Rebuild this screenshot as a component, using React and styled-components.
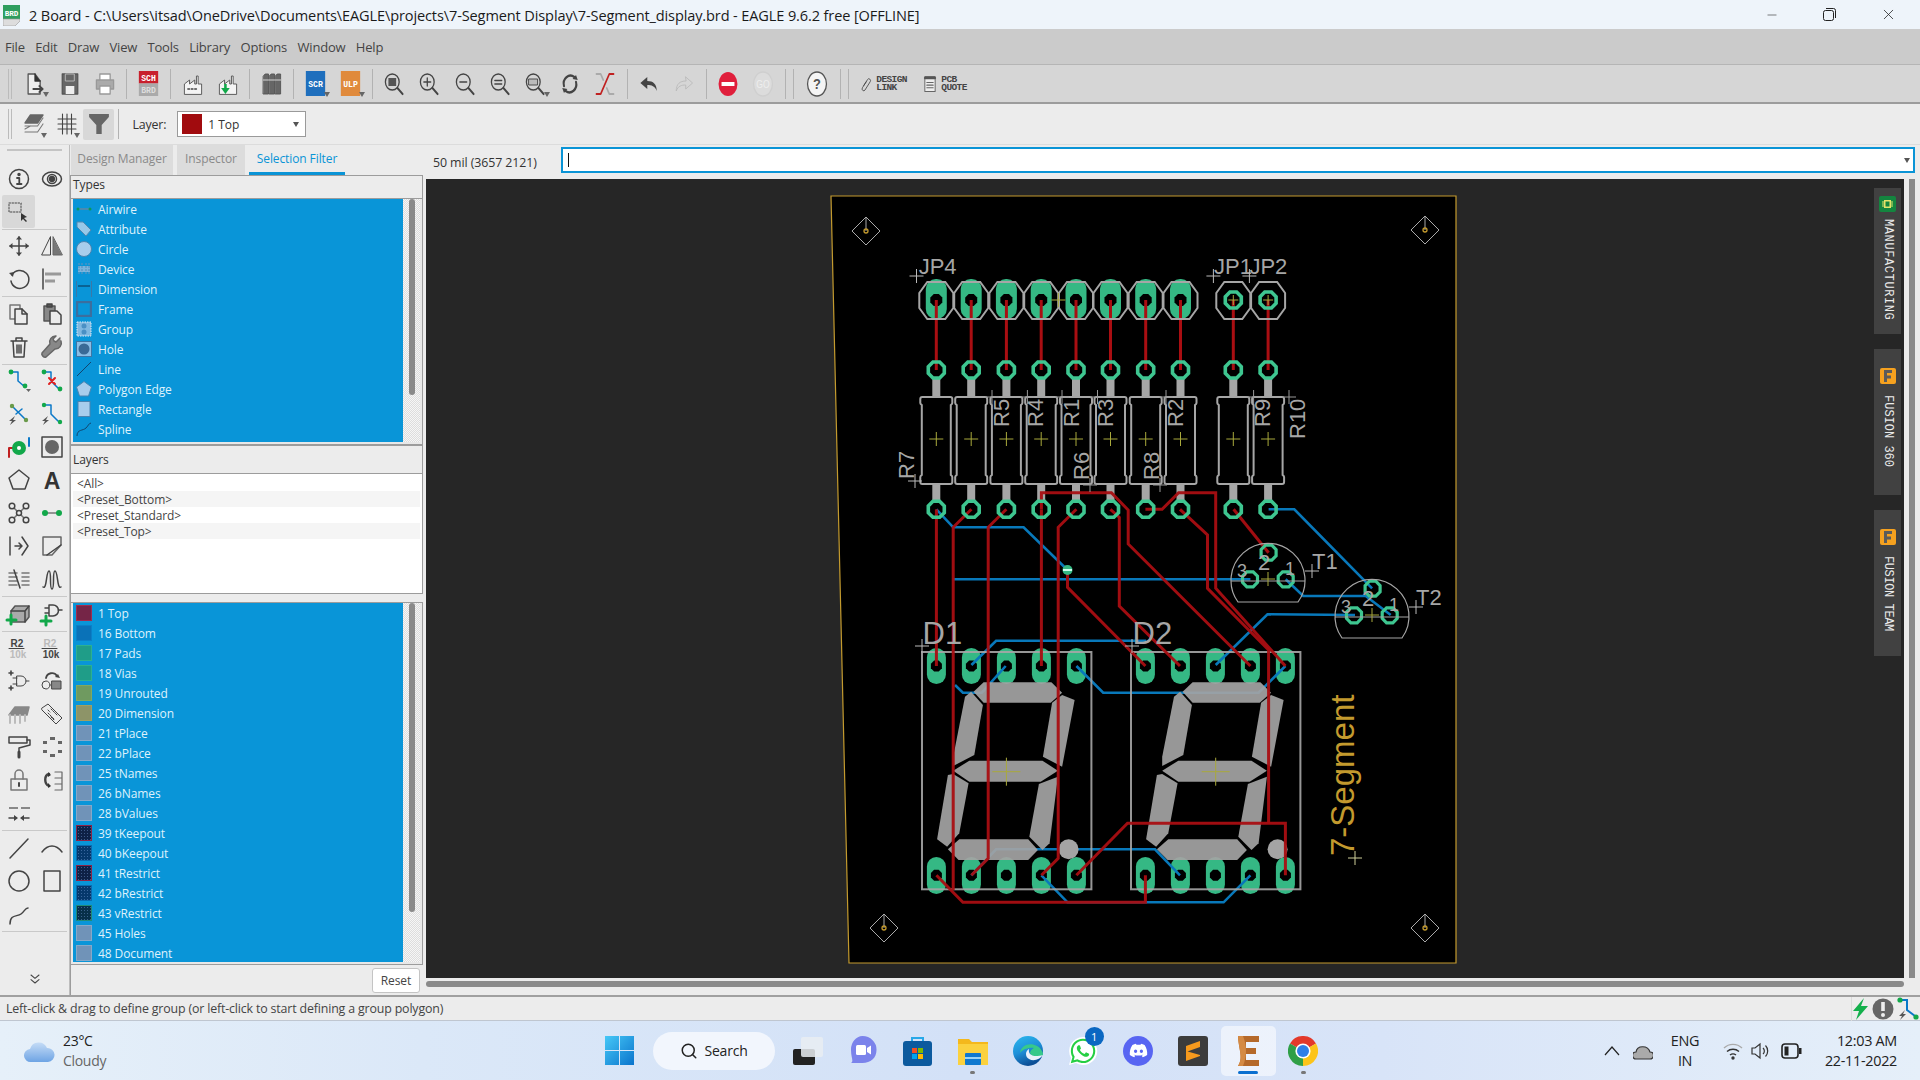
import React from "react";
import styled, { createGlobalStyle } from "styled-components";
import { Search, Minus, X } from "lucide-react";
import { FaWhatsapp, FaDiscord } from "react-icons/fa";

const GlobalStyle = createGlobalStyle`
  html, body { margin: 0; padding: 0; overflow: hidden; background: #ececec; }
  * { box-sizing: border-box; }
`;

/* ---------- shell ---------- */

const Page = styled.div`
  width: 1920px;
  height: 1080px;
  display: flex;
  flex-direction: column;
  font-family: "Liberation Sans", Arial, sans-serif;
  color: #333;
  overflow: hidden;
`;

const TitleBar = styled.div`
  height: 29px;
  flex: none;
  display: flex;
  align-items: center;
  background: #eef4fa;
  padding-left: 3px;
  font-family: "Open Sans", sans-serif;
  font-size: 14.55px;
  color: #1a1a1a;
  letter-spacing: -0.12px;
`;

const TitleText = styled.span`
  margin-left: 9px;
  white-space: nowrap;
`;

const WindowControls = styled.div`
  margin-left: auto;
  display: flex;
  align-items: center;
  padding-right: 23px;
  gap: 44px;
  color: #222;
`;

const MenuBar = styled.div`
  height: 36px;
  flex: none;
  display: flex;
  align-items: center;
  background: #cbcbcb;
  border-bottom: 1px solid #b5b5b5;
  padding-left: 5px;
  gap: 10.4px;
  font-family: "Open Sans", sans-serif;
  font-size: 13px;
  color: #444;
  letter-spacing: -0.2px;
`;

const MainToolbar = styled.div`
  height: 39px;
  flex: none;
  display: flex;
  align-items: center;
  background: #d6d6d6;
  border-bottom: 2px solid #9c9c9c;
  padding-left: 8px;
  svg { transform: scaleX(0.86); }
`;

const SecondToolbar = styled.div`
  height: 41px;
  flex: none;
  display: flex;
  align-items: center;
  background: #ececec;
  border-bottom: 1px solid #dcdcdc;
  padding-left: 8px;
  svg { transform: scaleX(0.9); }
`;

const Grip = styled.div`
  width: 4px;
  height: 30px;
  flex: none;
  margin-right: 5px;
  border-left: 1px solid #bbb;
  border-right: 1px solid #bbb;
`;

const Separator = styled.div`
  width: 8.6px;
  height: 30px;
  flex: none;
  display: flex;
  justify-content: center;
  &::before {
    content: "";
    width: 1px;
    background: #b2b2b2;
  }
`;

const ToolButton = styled.div`
  position: relative;
  width: ${(p) => p.$w || 35.2}px;
  height: 31px;
  flex: none;
  display: flex;
  align-items: center;
  justify-content: center;
  border-radius: 2px;
  background: ${(p) => (p.$on ? "#d8d8d8" : "transparent")};
  ${(p) =>
    p.$caret &&
    `&::after {
      content: "";
      position: absolute;
      right: 3px;
      bottom: 2px;
      border-left: 3px solid transparent;
      border-right: 3px solid transparent;
      border-top: 5px solid #666;
    }`}
`;

const LinkButton = styled.div`
  display: flex;
  align-items: center;
  gap: 2px;
  width: 65px;
  flex: none;
  margin-left: ${(p) => p.$ml || 0}px;
`;

const LinkLabel = styled.div`
  font-family: "Liberation Mono", monospace;
  font-size: 9.5px;
  line-height: 8px;
  font-weight: bold;
  color: #444;
  letter-spacing: -0.6px;
`;

const FieldLabel = styled.span`
  margin-left: 10px;
  font-size: 12.4px;
  color: #333;
  font-family: "Open Sans", sans-serif;
  letter-spacing: -0.2px;
`;

const LayerSelect = styled.div`
  position: relative;
  margin-left: 11px;
  width: 129px;
  height: 26px;
  display: flex;
  align-items: center;
  background: #fff;
  border: 1px solid #9a9a9a;
  padding-left: 4px;
  font-family: "Open Sans", sans-serif;
  font-size: 12px;
  color: #333;
  &::after {
    content: "";
    position: absolute;
    right: 6px;
    top: 10px;
    border-left: 3px solid transparent;
    border-right: 3px solid transparent;
    border-top: 5px solid #555;
  }
`;

const LayerChip = styled.span`
  width: 20px;
  height: 20px;
  background: #a10b0e;
  margin-right: 6px;
`;

const Workspace = styled.div`
  flex: 1;
  min-height: 0;
  display: flex;
  background: #ececec;
`;

/* ---------- left tool strip ---------- */

const ToolStrip = styled.div`
  width: 70px;
  flex: none;
  display: flex;
  flex-direction: column;
  padding: 0 2px;
  border-right: 1px solid #bdbdbd;
`;

const StripHandle = styled.div`
  height: 13px;
  margin: 4px 5px 0;
  border-top: 1px solid #c4c4c4;
  box-shadow: inset 0 3px 0 -2px #c4c4c4;
`;

const StripGroup = styled.div`
  display: grid;
  grid-template-columns: 33px 33px;
  grid-auto-rows: 33px;
  padding: 0 0 0.5px;
  border-bottom: ${(p) => (p.$last ? "none" : "1px solid #c9c9c9")};
`;

const StripCell = styled.div`
  display: flex;
  align-items: center;
  justify-content: center;
  position: relative;
  border-radius: 2px;
  background: ${(p) => (p.$on ? "#d8d8d8" : "transparent")};
`;

const StripChevron = styled.div`
  margin-top: auto;
  padding-bottom: 8px;
  text-align: center;
  line-height: 0;
`;

/* ---------- selection filter panel ---------- */

const SidePanel = styled.div`
  width: 353px;
  flex: none;
  display: flex;
  flex-direction: column;
  font-family: "Open Sans", sans-serif;
  font-size: 12px;
  letter-spacing: -0.1px;
`;

const Tabs = styled.div`
  height: 30px;
  flex: none;
  display: flex;
  gap: 4px;
  padding-left: 1px;
`;

const Tab = styled.div`
  width: ${(p) => p.$w}px;
  display: flex;
  align-items: center;
  justify-content: center;
  background: ${(p) => (p.$active ? "transparent" : "#dcdcdc")};
  color: ${(p) => (p.$active ? "#0a94d6" : "#8a8a8a")};
  border-bottom: 3px solid ${(p) => (p.$active ? "#0a94d6" : "#dcdcdc")};
`;

const Section = styled.div`
  height: ${(p) => p.$h}px;
  flex: none;
  display: flex;
  align-items: center;
  padding-left: 2px;
  padding-bottom: ${(p) => p.$pb || 0}px;
  border: 1px solid #9c9c9c;
  border-bottom: none;
  color: #333;
`;

const ListBox = styled.div`
  height: ${(p) => p.$h}px;
  flex: none;
  display: flex;
  background: ${(p) => (p.$plain ? "#fff" : "#e8e8e8")};
  border: 1px solid #9c9c9c;
  padding: 0 2px 2px;
  overflow: hidden;
`;

const BlueList = styled.div`
  width: 330px;
  flex: none;
  background: #0995d8;
  overflow: hidden;
`;

const BlueRow = styled.div`
  height: 20px;
  display: flex;
  align-items: center;
  padding-left: 3px;
  color: #dff2fc;
  white-space: nowrap;
`;

const RowIcon = styled.span`
  width: 16px;
  height: 16px;
  flex: none;
  margin-right: 6px;
  display: flex;
  align-items: center;
  justify-content: center;
`;

const Swatch = styled.span`
  width: 16px;
  height: 16px;
  flex: none;
  margin-right: 6px;
  background: ${(p) => p.$fill};
  border: 1px solid ${(p) => p.$edge || "rgba(255,255,255,0.25)"};
  ${(p) =>
    p.$dots &&
    `background-image: radial-gradient(rgba(120,160,220,.45) 0.6px, transparent 0.8px);
     background-size: 3px 3px;`}
`;

const ScrollTrack = styled.div`
  flex: 1;
  display: flex;
  justify-content: center;
  background-image: conic-gradient(#ddd 25%, #f6f6f6 0 50%, #ddd 0 75%, #f6f6f6 0);
  background-size: 2px 2px;
`;

const ScrollThumb = styled.div`
  width: 6px;
  height: ${(p) => p.$h}px;
  background: #8a8a8a;
  border-radius: 3px;
`;

const PlainList = styled.div`
  width: 100%;
  margin-top: 1px;
`;

const PlainRow = styled.div`
  height: 16px;
  padding-left: 4px;
  display: flex;
  align-items: center;
  background: ${(p) => (p.$alt ? "#f5f5f5" : "#fff")};
  color: #444;
`;

const PanelGap = styled.div`
  height: ${(p) => p.$h}px;
  flex: none;
  border-left: 1px solid #9c9c9c;
`;

const PanelFooter = styled.div`
  flex: 1;
  display: flex;
  justify-content: flex-end;
  align-items: center;
  padding-right: 3px;
  border-left: 1px solid #9c9c9c;
`;

const ResetButton = styled.div`
  width: 48px;
  height: 25px;
  display: flex;
  align-items: center;
  justify-content: center;
  background: #fff;
  border: 1px solid #c4c4c4;
  border-radius: 3px;
  font-size: 12px;
  color: #444;
`;

/* ---------- stage ---------- */

const Stage = styled.div`
  flex: 1;
  min-width: 0;
  margin-left: 3px;
  display: flex;
  flex-direction: column;
`;

const CommandRow = styled.div`
  height: 34px;
  flex: none;
  display: flex;
  align-items: center;
  padding: 0 5px 4px 7px;
  font-family: "Open Sans", sans-serif;
  font-size: 12.4px;
  color: #333;
`;

const CoordText = styled.span`
  width: 128px;
  flex: none;
  margin-top: 4px;
  letter-spacing: -0.1px;
  white-space: nowrap;
`;

const CommandInput = styled.div`
  position: relative;
  flex: 1;
  height: 26px;
  background: #fff;
  border: 2px solid #0a94d6;
  padding-left: 5px;
  display: flex;
  align-items: center;
  &::before {
    content: "";
    width: 1px;
    height: 14px;
    background: #111;
  }
  &::after {
    content: "";
    position: absolute;
    right: 3px;
    top: 9px;
    border-left: 3px solid transparent;
    border-right: 3px solid transparent;
    border-top: 5px solid #555;
  }
`;

const CanvasRow = styled.div`
  flex: 1;
  min-height: 0;
  display: flex;
`;

const Canvas = styled.div`
  position: relative;
  flex: 1;
  min-width: 0;
  background: #262626;
  overflow: hidden;
`;

const BoardSvg = styled.svg`
  display: block;
  width: 100%;
  height: 100%;
`;

const SideTab = styled.div`
  position: absolute;
  right: 3px;
  top: ${(p) => p.$top}px;
  width: 27px;
  height: 146px;
  background: #414141;
  display: flex;
  flex-direction: column;
  align-items: center;
  padding-top: ${(p) => p.$pad}px;
  gap: ${(p) => p.$gap}px;
`;

const SideTabText = styled.span`
  writing-mode: vertical-rl;
  font-family: "Liberation Mono", monospace;
  font-size: 12px;
  letter-spacing: ${(p) => p.$ls || 0}px;
  color: #ececec;
  white-space: nowrap;
`;

const VScroll = styled.div`
  width: 16px;
  flex: none;
  padding-left: 5px;
  background: #ececec;
`;

const VThumb = styled.div`
  width: 6px;
  height: 100%;
  background: #8a8a8a;
`;

const HScroll = styled.div`
  height: 17px;
  flex: none;
  padding: 3px 16px 0 0;
`;

const HThumb = styled.div`
  height: 6px;
  background: #8a8a8a;
  border-radius: 3px;
`;

const StatusBar = styled.div`
  height: 26px;
  flex: none;
  display: flex;
  align-items: center;
  padding-left: 6px;
  background: #ececec;
  border-top: 2px solid #a0a0a0;
  border-bottom: 1px solid #bfc6d0;
  font-family: "Open Sans", sans-serif;
  font-size: 12.4px;
  color: #444;
  letter-spacing: -0.16px;
`;

const StatusIcons = styled.div`
  margin-left: auto;
  display: flex;
  align-items: center;
  gap: 3px;
  padding-right: 1px;
  border-left: 1px solid #dadada;
`;

/* ---------- taskbar ---------- */

const TaskBar = styled.div`
  height: 59px;
  flex: none;
  display: flex;
  align-items: center;
  background: linear-gradient(90deg, #e6f0f9 0%, #dbe8f8 22%, #d3e1f7 50%, #d8e4f8 72%, #e5eff9 100%);
  font-family: "Open Sans", sans-serif;
  color: #333;
`;

const Weather = styled.div`
  width: 605px;
  flex: none;
  display: flex;
  align-items: center;
  padding-left: 24px;
  gap: 8px;
`;

const WeatherText = styled.div`
  font-size: 14px;
  line-height: 20px;
  letter-spacing: -0.3px;
  color: ${(p) => (p.$dim ? "#666" : "#222")};
`;

const SearchPill = styled.div`
  width: 122px;
  height: 38px;
  margin: 0 5px 0 19px;
  flex: none;
  display: flex;
  align-items: center;
  justify-content: center;
  gap: 6px;
  border-radius: 19px;
  background: #f2f6fd;
  font-size: 14px;
  color: #222;
  letter-spacing: -0.2px;
`;

const TaskItem = styled.div`
  position: relative;
  width: 55.1px;
  height: 50px;
  flex: none;
  display: flex;
  align-items: center;
  justify-content: center;
  border-radius: 5px;
  background: ${(p) => (p.$active ? "rgba(255,255,255,.55)" : "transparent")};
`;

const RunDot = styled.span`
  position: absolute;
  bottom: 2px;
  left: 50%;
  height: 3px;
  width: ${(p) => (p.$active ? 20 : 5)}px;
  margin-left: ${(p) => (p.$active ? -10 : -2.5)}px;
  border-radius: 2px;
  background: ${(p) => (p.$active ? "#0a6fd0" : "#777")};
`;

const Badge = styled.span`
  position: absolute;
  top: 1px;
  right: 7px;
  width: 19px;
  height: 19px;
  border-radius: 50%;
  background: #0a67c2;
  color: #fff;
  font-size: 11px;
  display: flex;
  align-items: center;
  justify-content: center;
`;

const Tray = styled.div`
  margin-left: auto;
  display: flex;
  align-items: center;
  padding-right: 23px;
  font-size: 14.4px;
  color: #222;
  letter-spacing: -0.3px;
`;

const TrayStack = styled.div`
  width: ${(p) => p.$w}px;
  text-align: ${(p) => p.$align};
  line-height: 20px;
  white-space: nowrap;
  margin-right: ${(p) => p.$mr || 0}px;
`;

const TrayIcon = styled.span`
  width: 24px;
  display: flex;
  justify-content: center;
  margin-right: ${(p) => p.$mr || 0}px;
`;

/* ---------- icons ---------- */

const Glyph = ({ size = 24, box = 24, children }) => (
  <svg width={size} height={size} viewBox={`0 0 ${box} ${box}`} overflow="visible" fill="none" stroke="#444" strokeWidth="1.5" strokeLinecap="round" strokeLinejoin="round">
    {children}
  </svg>
);

const GREEN = "#12a84a";
const BLUE = "#0a78c8";

const icons = {
  info: <><circle cx="12" cy="12" r="9.5" /><circle cx="12" cy="7.5" r="1" fill="#444" /><path d="M10 11h2.3v6M10 17h4.5" strokeWidth="1.8" /></>,
  eye: <><ellipse cx="12" cy="12" rx="9.5" ry="7" /><circle cx="12" cy="12" r="4.5" /><circle cx="12" cy="12" r="2.4" fill="#444" /></>,
  select: <><rect x="2" y="3" width="12" height="9" strokeDasharray="1.5 1.5" strokeWidth="1" /><path d="M14 13l0 8 2-2 3 3 1-1-3-3 3-1z" fill="#333" stroke="none" /></>,
  move: <><path d="M12 3v18M3 12h18" /><path d="M12 2l-3 3.5h6zM12 22l-3-3.5h6zM2 12l3.5-3v6zM22 12l-3.5-3v6z" fill="#444" stroke="none" /></>,
  mirror: <><path d="M10.5 3v18H2z" strokeWidth="1" /><path d="M13 3v18h9z" fill="#777" stroke="#666" strokeWidth="1" /></>,
  rotate: <><path d="M5 8a9 9 0 1 1-1 6" /><path d="M2 6l5-1-1 5z" fill="#444" stroke="none" /></>,
  align: <><path d="M3 2v20" /><path d="M5 7h16" stroke="#999" strokeWidth="3" strokeLinecap="butt" /><path d="M5 14h10" stroke="#999" strokeWidth="3" strokeLinecap="butt" /></>,
  copy: <><path d="M3 3h10v14H3z" stroke="#777" /><path d="M8 7h7l5 5v10H8z" fill="#ececec" /><path d="M15 7v5h5" /></>,
  paste: <><path d="M4 4h11v15H4z" fill="#888" stroke="#555" /><path d="M7 2h5v3H7z" fill="#555" /><path d="M10 9h7l4 4v9H10z" fill="#ececec" /></>,
  trash: <><path d="M4 6h16M9 6V3h6v3M6 6l1 16h10l1-16" /><path d="M10 10v8M12 10v8M14 10v8" /></>,
  wrench: <path d="M20 3l-4 4-2-1-1-2 3-3a6 6 0 0 0-6 8L2 18c-1 2 2 5 4 4l9-8a6 6 0 0 0 6-8" fill="#888" stroke="#666" />,
  route: <><path d="M4 3h7v9l7 6" stroke={BLUE} /><circle cx="4" cy="3" r="2.4" fill={GREEN} stroke="none" /><circle cx="18" cy="17" r="2.4" fill={GREEN} stroke="none" /><path d="M19 20h5l-2.5 3z" fill="#666" stroke="none" /></>,
  ripup: <><path d="M4 3h7v9l7 7" stroke={BLUE} /><circle cx="4" cy="3" r="2.4" fill={GREEN} stroke="none" /><circle cx="20" cy="20" r="2.4" fill={GREEN} stroke="none" /><path d="M9 9l6 6M15 9l-6 6" stroke="#e02020" strokeWidth="2" /></>,
  fanout: <><path d="M5 4l14 14M9 12l6-5" stroke={BLUE} /><circle cx="5" cy="4" r="2.2" fill="#6a9a4a" stroke="none" /><circle cx="19" cy="18" r="2.2" fill="#6a9a4a" stroke="none" /><path d="M8 14l-6 5 3 0-2 4 6-5-3 0z" fill="#555" stroke="none" /></>,
  reroute: <><path d="M4 3h7v9l7 7" stroke={BLUE} /><circle cx="4" cy="3" r="2.2" fill={GREEN} stroke="none" /><circle cx="20" cy="20" r="2.2" fill={GREEN} stroke="none" /><path d="M8 14l-6 5 3 0-2 4 6-5-3 0z" fill="#555" stroke="none" /></>,
  via: <><path d="M2 22v-9h4" stroke="#c02020" strokeWidth="2" /><path d="M22 3v8" stroke={BLUE} strokeWidth="2" /><circle cx="12" cy="13" r="7" fill={GREEN} stroke="none" /><circle cx="12" cy="13" r="2" fill="#fff" stroke="none" /></>,
  hole: <><rect x="2" y="2" width="20" height="20" /><circle cx="12" cy="12" r="7" fill="#666" stroke="none" /></>,
  polygon: <path d="M12 2l10 8-4 11H6L2 10z" />,
  letter: <text x="12" y="20.5" fontSize="23" textAnchor="middle" fill="#333" stroke="none" fontFamily="Liberation Sans" fontWeight="bold">A</text>,
  net: <><path d="M6 6l12 12M18 6L6 18" stroke="#777" /><circle cx="5" cy="5" r="2.8" fill="#ececec" /><circle cx="19" cy="5" r="2.8" fill="#ececec" /><circle cx="5" cy="19" r="2.8" fill="#ececec" /><circle cx="19" cy="19" r="2.8" fill="#ececec" /><circle cx="12" cy="12" r="2.5" fill="#ececec" /></>,
  air: <><path d="M5 12h14" stroke="#777" /><circle cx="5" cy="12" r="3" fill={GREEN} stroke="none" /><circle cx="19" cy="12" r="3" fill={GREEN} stroke="none" /></>,
  smash: <><path d="M3 3v18M8 12h6M12 9l3 3-3 3" /><path d="M15 3l6 9-6 9" /></>,
  corner: <><path d="M3 3h18v8L12 21H3z" stroke="#666" /><path d="M7 21l14-10" /></>,
  meander: <><path d="M2 6h8M2 10h8M2 14h8M2 18h8" stroke="#777" /><path d="M7 3l6 18" /><path d="M15 6h7M15 10h7M15 14h7M15 18h7" stroke="#777" /></>,
  wave: <path d="M3 20c4 3 3-16 6-16 3 0 0 18 3 18s0-18 3-18 2 19 6 16" />,
  addBox: <><path d="M4 9l4-5h14v11l-4 5H4z" fill="#aaa" stroke="#555" /><path d="M4 9h14v11M18 9l4-5" /><path d="M4 13v9M0 18h9" stroke={GREEN} strokeWidth="3" /></>,
  addGate: <><path d="M9 3h4a5 5 0 0 1 0 11H9zM5 6h4M5 11h4M18 8h4" /><path d="M6 14v9M1 19h10" stroke={GREEN} strokeWidth="3" /></>,
  valueA: <><text x="10" y="11" fontSize="10" textAnchor="middle" fontWeight="bold" fill="#444" stroke="none" fontFamily="Liberation Sans">R2</text><path d="M2 12.5h15" strokeWidth="1" /><text x="11" y="22" fontSize="10" textAnchor="middle" fontWeight="bold" fill="#bbb" stroke="none" fontFamily="Liberation Sans">10k</text></>,
  valueB: <><text x="10" y="11" fontSize="10" textAnchor="middle" fontWeight="bold" fill="#bbb" stroke="none" fontFamily="Liberation Sans">R2</text><path d="M2 12.5h15" strokeWidth="1" /><text x="11" y="22" fontSize="10" textAnchor="middle" fontWeight="bold" fill="#444" stroke="none" fontFamily="Liberation Sans">10k</text></>,
  replace: <><path d="M2 4h4M4 2v4M2 19h4M4 17v4" strokeWidth="1.6" /><path d="M10 7h4a5 5 0 0 1 0 10h-4zM6 9h4M6 15h4M19 12h3" strokeWidth="1" /></>,
  swap: <><circle cx="6" cy="16" r="4" strokeWidth="1" /><rect x="12" y="12" width="9" height="8" fill="#888" strokeWidth="1" /><path d="M6 9a6 6 0 0 1 11-2" strokeWidth="1.8" /><path d="M20 9l-5-1 3-3z" fill="#444" stroke="none" /></>,
  chip: <><path d="M2 13l6-8h14l-2 8z" fill="#888" stroke="#888" /><path d="M3 13v8M8 13v8M13 13v8M18 13v6" stroke="#bbb" strokeWidth="2" /></>,
  tag: <><path d="M2 6l6-4 14 14-6 6L2 8z" strokeWidth="1" /><path d="M8 8l2 2M11 7l6 6M8 11l6 6M11 15l3 3" strokeDasharray="1.5 1" strokeWidth="1" /></>,
  paint: <><rect x="2" y="2" width="18" height="6" /><path d="M20 5h3v5l-11 3v4" /><path d="M12 17v5" strokeWidth="3" /></>,
  ring: <><rect x="10" y="2" width="5" height="3" fill="#666" stroke="none" /><rect x="10" y="19" width="5" height="3" fill="#666" stroke="none" /><rect x="3" y="6" width="4" height="3" fill="#666" stroke="none" /><rect x="18" y="6" width="4" height="3" fill="#666" stroke="none" /><rect x="3" y="15" width="4" height="3" fill="#666" stroke="none" /><rect x="18" y="15" width="4" height="3" fill="#666" stroke="none" /></>,
  lock: <><rect x="4" y="11" width="16" height="11" stroke="#777" /><path d="M8 11V6a4 4 0 0 1 8 0v5" stroke="#777" /><path d="M12 15v3" strokeWidth="2" /></>,
  pinswap: <><path d="M9 6C4 7 4 16 9 18" strokeWidth="2.4" /><path d="M8 4l3 3-3 2zM8 15l3 3-3 2z" fill="#333" stroke="none" /><path d="M15 4h7v18h-7M15 10h7M15 16h7" strokeWidth="1.2" stroke="#666" /></>,
  compress: <><path d="M2 7h9M14 7h9" stroke="#888" strokeWidth="2" strokeLinecap="butt" /><path d="M2 17h7M22 17h-7" /><path d="M11 17l-4-3v6zM13 17l4-3v6z" fill="#444" stroke="none" /></>,
  line: <path d="M3 22L21 3" />,
  arc: <path d="M2 16c6-8 14-8 20 0" />,
  circle: <circle cx="12" cy="12" r="10" />,
  rect: <rect x="4" y="2" width="16" height="20" />,
  spline: <path d="M3 22c0-10 7-7 11-10s4-6 7-6" />,
  newdoc: <><path d="M4 2h8l6 7v13H4z" fill="#eee" stroke="#555" /><path d="M12 2v7h6" fill="#333" stroke="#333" /><path d="M10 17h10M17 14l4 3-4 3" strokeWidth="2" /></>,
  save: <><path d="M3 2h18v20H3z" fill="#666" stroke="#555" /><rect x="7" y="2" width="10" height="7" fill="#666" stroke="#bbb" strokeWidth="1" /><rect x="7" y="14" width="10" height="8" fill="#eee" stroke="none" /></>,
  print: <><rect x="6" y="2" width="12" height="7" fill="#fff" stroke="#999" /><rect x="2" y="8" width="20" height="9" fill="#aaa" stroke="#999" /><rect x="6" y="14" width="12" height="8" fill="#fff" stroke="#999" /></>,
  factory: <><path d="M2 22V12l6-4v4l6-4v4h2V4h2v8h4v10z" fill="#f4f4f4" stroke="#555" strokeWidth="1" /><path d="M6 17h2M10 17h2M14 17h2" strokeWidth="1.6" /></>,
  factoryDown: <><path d="M2 22V12l6-4v4l6-4v4h2V4h2v8h4v10z" fill="#f4f4f4" stroke="#555" strokeWidth="1" /><path d="M9 12v6" stroke={GREEN} strokeWidth="3" strokeLinecap="butt" /><path d="M4 16h10l-5 6z" fill={GREEN} stroke="none" /></>,
  books: <><path d="M2 4l2-2h4v20H2zM9 4l2-2h4v20H9zM16 4l2-2h4v20h-6z" fill="#666" stroke="#555" strokeWidth="1" /><path d="M2 8h6M9 8h6M16 8h6" stroke="#ddd" strokeWidth="1" /></>,
  zoomFit: <><circle cx="10" cy="10" r="8" /><rect x="5.5" y="6" width="9" height="8" fill="#555" stroke="none" /><path d="M16 16l6 6" strokeWidth="2.2" /></>,
  zoomIn: <><circle cx="10" cy="10" r="8" /><path d="M6 10h8M10 6v8" /><path d="M16 16l6 6" strokeWidth="2.2" /></>,
  zoomOut: <><circle cx="10" cy="10" r="8" /><path d="M6 10h8" /><path d="M16 16l6 6" strokeWidth="2.2" /></>,
  zoomEq: <><circle cx="10" cy="10" r="8" /><path d="M6 8.5h8M6 12h8" /><path d="M16 16l6 6" strokeWidth="2.2" /></>,
  zoomSel: <><circle cx="10" cy="10" r="8" /><rect x="5" y="7" width="10" height="6" fill="#bbb" strokeWidth="1" /><path d="M16 16l6 6" strokeWidth="2.2" /></>,
  refresh: <><path d="M5 14a8 8 0 0 1 12-9M19 10a8 8 0 0 1-12 9" strokeWidth="2.4" /><path d="M21 8l-6-1 4-4zM3 16l6 1-4 4z" fill="#444" stroke="none" /></>,
  ratsnest: <><path d="M2 22h5l10-20h5" stroke="#c02020" strokeWidth="1.8" /><path d="M2 2h5l3 6M14 16l3 6h5" stroke="#aaa" strokeWidth="1.8" /></>,
  undo: <path d="M10 5L2 11l8 6v-4c5 0 9 1 11 6 0-7-4-10-11-10z" fill="#444" stroke="none" />,
  redo: <path d="M14 5l8 6-8 6v-4c-5 0-9 1-11 6 0-7 4-10 11-10z" fill="none" stroke="#bbb" strokeWidth="1" />,
  stop: <><ellipse cx="12" cy="12" rx="11" ry="12" fill="#e01f3c" stroke="none" /><rect x="4.5" y="10" width="15" height="4" fill="#fff" stroke="none" /></>,
  go: <><ellipse cx="12" cy="12" rx="11" ry="12" fill="#dcdcdc" stroke="#cfcfcf" /><text x="12" y="16" fontSize="10" textAnchor="middle" fill="#eee" stroke="none" fontFamily="Liberation Sans">GO</text></>,
  help: <><ellipse cx="12" cy="12" rx="11" ry="12" fill="#f4f4f4" stroke="#555" /><text x="12" y="17" fontSize="15" textAnchor="middle" fontWeight="bold" fill="#555" stroke="none" fontFamily="Liberation Sans">?</text></>,
  link: <path d="M10 14l6-8a2.5 2.5 0 0 1 4 3l-8 11a2.5 2.5 0 0 1-4-3l6-8" strokeWidth="1.2" />,
  quote: <><rect x="4" y="2" width="16" height="20" fill="#eee" stroke="#666" /><path d="M4 4h16" strokeWidth="3" stroke="#555" /><path d="M7 10h10M7 13.5h10M7 17h10" stroke="#666" /></>,
  layers: <><path d="M8 3h14l-6 8H2z" fill="#666" stroke="#666" /><path d="M2 14h14l6-8M2 17l6-3M2 20h14l6-8" strokeWidth="1.2" stroke="#777" /></>,
  grid: <path d="M7 2v20M12 2v20M17 2v20M2 7h20M2 12h20M2 17h20" strokeWidth="1.2" />,
  filter: <path d="M1 2h22v3l-8 8v9h-6v-9L1 5z" fill="#666" stroke="none" />,
  chevrons: <path d="M6 6l6 5 6-5M6 13l6 5 6-5" strokeWidth="1.6" />,
};

const Ico = ({ name, size }) => <Glyph size={size}>{icons[name]}</Glyph>;

const typeIcons = {
  Airwire: <><path d="M1 8h14" stroke="#4a8ab0" strokeWidth="2" /><circle cx="2" cy="8" r="1.5" fill="#0a9a5a" stroke="none" /><circle cx="14" cy="8" r="1.5" fill="#0a9a5a" stroke="none" /></>,
  Attribute: <path d="M1 3V1h6l8 8-5 6-9-9z" fill="#98c8e8" stroke="#5088b0" strokeWidth="1" />,
  Circle: <circle cx="8" cy="8" r="7.5" fill="#a8cdec" stroke="#4a84b0" strokeWidth="1" />,
  Device: <><rect x="2" y="5" width="12" height="6" fill="#7ab4dc" stroke="none" /><path d="M3 2v12M6 2v12M10 2v12M13 2v12" stroke="#5a94c0" strokeWidth="1.2" strokeDasharray="2 1" /></>,
  Dimension: <><path d="M0.5 0v16M15.5 0v16" stroke="#3a78a8" strokeWidth="1" /><path d="M2 5h12" stroke="#0c3050" strokeWidth="1" /></>,
  Frame: <rect x="1" y="1" width="14" height="14" fill="none" stroke="#3c6e9e" strokeWidth="2.4" />,
  Group: <><rect x="1" y="1" width="14" height="14" fill="#80b8e0" stroke="#dceaf5" strokeWidth="1" strokeDasharray="1.5 1" /><circle cx="8" cy="5" r="2.5" fill="#4a90c4" stroke="none" /><circle cx="8" cy="11" r="2.5" fill="#4a90c4" stroke="none" /></>,
  Hole: <><rect x="0.5" y="0.5" width="15" height="15" fill="#8cbde4" stroke="#3c76a6" strokeWidth="1" /><circle cx="8" cy="8" r="5.5" fill="#3a6a96" stroke="none" /></>,
  Line: <path d="M1 15L15 1" stroke="#12456e" strokeWidth="1" />,
  "Polygon Edge": <path d="M8 0.5l7.5 5.5-3 9h-9l-3-9z" fill="#a8cdec" stroke="#4a84b0" strokeWidth="1" />,
  Rectangle: <rect x="2" y="0.5" width="12" height="15" fill="#a8cdec" stroke="#4a84b0" strokeWidth="1" />,
  Spline: <path d="M1 15c0-7 6-5 9-8s2-4 5-5" stroke="#12456e" strokeWidth="1" fill="none" />,
};

const typeNames = Object.keys(typeIcons);

const layers = [
  ["1 Top", "#752547", "#a02c50"],
  ["16 Bottom", "#0a72b8", "#0a80c8"],
  ["17 Pads", "#1f9d88", "#2cb090"],
  ["18 Vias", "#1f9d88", "#2cb090"],
  ["19 Unrouted", "#6f9a60", "#7fa860"],
  ["20 Dimension", "#8d9468", "#a0a060"],
  ["21 tPlace", "#7093b8", "#86a8c8"],
  ["22 bPlace", "#7093b8", "#86a8c8"],
  ["25 tNames", "#7093b8", "#86a8c8"],
  ["26 bNames", "#7093b8", "#86a8c8"],
  ["28 bValues", "#7093b8", "#86a8c8"],
  ["39 tKeepout", "#0e2146", "#8c2448", true],
  ["40 bKeepout", "#06386c", "#0a6cb0", true],
  ["41 tRestrict", "#0e2146", "#8c2448", true],
  ["42 bRestrict", "#06386c", "#0a6cb0", true],
  ["43 vRestrict", "#08304a", "#1f8c78", true],
  ["45 Holes", "#7093b8", "#86a8c8"],
  ["48 Document", "#7093b8", "#86a8c8"],
];

const stripGroups = [
  [["info", false], ["eye", false], ["select", false, true]],
  [["move"], ["mirror"], ["rotate"], ["align"]],
  [["copy"], ["paste"], ["trash"], ["wrench"]],
  [["route"], ["ripup"], ["fanout"], ["reroute"], ["via"], ["hole"], ["polygon"], ["letter"], ["net"], ["air"], ["smash"], ["corner"], ["meander"], ["wave"]],
  [["addBox"], ["addGate"]],
  [["valueA"], ["valueB"], ["replace"], ["swap"], ["chip"], ["tag"], ["paint"], ["ring"], ["lock"], ["pinswap"], ["compress"]],
  [["line"], ["arc"], ["circle"], ["rect"], ["spline"]],
];

/* ---------- board drawing: trace points are read at 2.8 x 3 from the board origin (880, 500) ---------- */

const pt = ([X, Y]) => `${(880 + X / 2.8).toFixed(1)},${(500 + Y / 3).toFixed(1)}`;
const pts = (list) => list.map(pt).join(" ");

const octagon = (cx, cy, r) => {
  const c = r * 0.42;
  return [
    [cx - c, cy - r], [cx + c, cy - r], [cx + r, cy - c], [cx + r, cy + c],
    [cx + c, cy + r], [cx - c, cy + r], [cx - r, cy + c], [cx - r, cy - c],
  ].map((p) => p.join(",")).join(" ");
};

const PIN_X = [936.3, 971.2, 1006.4, 1041.2, 1076, 1110.5, 1145.7, 1180.5, 1233.3, 1268.1];
const D_X = [936.4, 971.4, 1006.4, 1041.4, 1076.4, 1145.4, 1180.4, 1215.4, 1250.4, 1285.4];

const PAD = "#35b884";
const RING = "#3ec690";
const GRAY = "#a6a6a6";
const CROSS = "#a9a93c";
const RED = "#a90e12";
const TRACE_BLUE = "#0878ba";
const GOLD = "#c39a2e";

const blueTraces = [
  [[158, 28], [205, 82], [402, 82], [525, 210]],
  [[1088, 28], [1160, 28], [1378, 265]],
  [[205, 238], [1037, 238]],
  [[1136, 238], [1185, 288], [1360, 288], [1430, 345]],
  [[1330, 345], [1085, 343], [940, 495]],
  [[256, 495], [325, 422], [745, 422]],
  [[210, 555], [232, 578], [285, 578], [352, 498]],
  [[550, 498], [625, 578], [1060, 578], [1135, 498]],
  [[256, 1126], [325, 1048], [770, 1048], [840, 1126]],
  [[452, 1126], [525, 1207], [962, 1207], [1037, 1126]],
];

const redTraces = [
  [[158, 28], [158, 498]],
  [[256, 28], [205, 82], [205, 1170]],
  [[158, 1126], [232, 1207], [743, 1207], [743, 1126]],
  [[354, 28], [303, 82], [303, 1075], [256, 1126]],
  [[452, 28], [452, 498]],
  [[550, 28], [499, 82], [499, 1075], [452, 1126]],
  [[645, 28], [670, 52], [670, 318], [840, 498]],
  [[525, 210], [525, 262], [743, 498]],
  [[452, 28], [452, -22], [648, -22], [695, 30], [695, 132], [1037, 498]],
  [[743, 28], [790, 28], [836, -22], [940, -22], [940, 265], [1135, 498]],
  [[840, 28], [917, 105], [917, 265], [1088, 450], [1088, 968]],
  [[990, 28], [1088, 158]],
  [[550, 1126], [693, 970], [1135, 970], [1135, 1126]],
];

const segments = [
  [[262, 575], [290, 547], [480, 547], [510, 578], [478, 608], [290, 608]],
  [[238, 590], [255, 575], [288, 615], [264, 765], [205, 798], [205, 770]],
  [[510, 585], [545, 600], [510, 800], [456, 770], [482, 608]],
  [[205, 812], [250, 782], [455, 782], [498, 812], [450, 845], [250, 845]],
  [[205, 822], [248, 850], [222, 1000], [188, 1040], [160, 1018], [190, 825]],
  [[498, 830], [445, 852], [418, 1010], [455, 1050], [475, 1030]],
  [[190, 1048], [222, 1018], [415, 1018], [442, 1050], [415, 1080], [220, 1080]],
];

const Cross = ({ x, y, r = 7, color = CROSS }) => (
  <path d={`M${x - r} ${y}H${x + r}M${x} ${y - r}V${y + r}`} stroke={color} strokeWidth="1" fill="none" />
);

const Label = ({ x, y, size = 22, rotate, color = GRAY, children }) => (
  <text
    x={x}
    y={y}
    fontSize={size}
    fill={color}
    fontFamily="Liberation Sans, sans-serif"
    transform={rotate ? `rotate(-90 ${x} ${y})` : undefined}
  >
    {children}
  </text>
);

const Corner = ({ x, y }) => (
  <g>
    <polygon points={`${x},${y - 14} ${x + 14},${y} ${x},${y + 14} ${x - 14},${y}`} fill="none" stroke="#aaa" strokeWidth="1" />
    <path d={`M${x} ${y - 14}V${y}`} stroke="#aaa" strokeWidth="1" />
    <circle cx={x} cy={y} r="2" fill="none" stroke={GOLD} strokeWidth="1.3" />
  </g>
);

const Resistor = ({ x }) => (
  <g>
    <rect x={x - 4} y="379" width="8" height="18" fill={GRAY} />
    <rect x={x - 4} y="484" width="8" height="16" fill={GRAY} />
    <path
      d={`M${x - 14} 397H${x + 14}q2 0 2 2v4q0 1 -1.5 2V475q1.5 1 1.5 2v5q0 2 -2 2H${x - 14}q-2 0 -2 -2v-5q0 -1 1.5 -2V405q-1.5 -1 -1.5 -2v-4q0 -2 2 -2z`}
      fill="none"
      stroke={GRAY}
      strokeWidth="2"
    />
    <Cross x={x} y={439} />
  </g>
);

const Transistor = ({ dx, dy, name }) => (
  <g transform={`translate(${dx} ${dy})`}>
    <path d="M1238 602A37 37 0 1 1 1298 602Z" fill="none" stroke={GRAY} strokeWidth="1.2" />
    <path d="M1231 581H1305" stroke={GRAY} strokeWidth="1.2" />
    <Cross x={1268} y={579} />
    <Label x={1237} y={577} size={18}>3</Label>
    <Label x={1258} y={570} size={22}>2</Label>
    <Label x={1285} y={575} size={18}>1</Label>
    <Label x={1312} y={569} size={22}>{name}</Label>
    <Cross x={1312} y={571} color="#bbb" />
  </g>
);

const Display = () => (
  <g>
    <rect x="922" y="652" width="169.4" height="237.3" fill="none" stroke={GRAY} strokeWidth="2" opacity="0.9" />
    {segments.map((s, i) => (
      <polygon key={i} points={pts(s)} fill="#a4a4a4" opacity="0.92" />
    ))}
    <circle cx="1068.6" cy="849.3" r="10" fill="#a4a4a4" />
  </g>
);

const JP_CROSSES = [[916.5, 276], [1213.4, 276], [1249.4, 276]];
const RES_CROSSES = [992, 1027.4, 1062, 1097.5, 1166, 1253.6, 1289];

const Board = () => (
  <BoardSvg viewBox="426 179 1478 799" preserveAspectRatio="xMinYMin meet">
    <polygon points="831,196 1456,196 1456,963 849,963" fill="#000" stroke={GOLD} strokeWidth="1.2" />
    <Corner x={866} y={231} />
    <Corner x={1425} y={230} />
    <Corner x={884} y={928} />
    <Corner x={1425} y={928} />

    {PIN_X.slice(0, 8).map((x) => (
      <g key={x}>
        <rect x={x - 10.5} y="279" width="21" height="40" rx="10" fill={PAD} />
        <polygon points={octagon(x, 300, 6)} fill="#000" />
      </g>
    ))}
    {[...D_X].map((x) => (
      <g key={x}>
        <rect x={x - 9.5} y="648" width="19" height="36" rx="9.5" fill={PAD} />
        <rect x={x - 9.5} y="857" width="19" height="37" rx="9.5" fill={PAD} />
        <polygon points={octagon(x, 666, 5.5)} fill="#000" />
        <polygon points={octagon(x, 875.3, 5.5)} fill="#000" />
      </g>
    ))}
    {PIN_X.map((x) => (
      <g key={x}>
        <circle cx={x} cy="370" r="7" fill="#000" />
        <circle cx={x} cy="509.3" r="7" fill="#000" />
      </g>
    ))}

    {blueTraces.map((t, i) => (
      <polyline key={i} points={pts(t)} fill="none" stroke={TRACE_BLUE} strokeWidth="2.6" />
    ))}

    {PIN_X.map((x) => <Resistor key={x} x={x} />)}
    <Display />
    <g transform="translate(209 0)"><Display /></g>
    <Cross x={1006.4} y={771.7} r={14} />
    <Cross x={1215.7} y={771.7} r={14} />

    {PIN_X.map((x) => (
      <path key={x} d={`M${x} 300V370`} stroke={RED} strokeWidth="3" fill="none" />
    ))}
    {redTraces.map((t, i) => (
      <polyline key={i} points={pts(t)} fill="none" stroke={RED} strokeWidth="3" strokeOpacity="0.95" />
    ))}

    {PIN_X.map((x) => (
      <g key={x} fill="none" stroke={RING} strokeWidth="3.6">
        <polygon points={octagon(x, 370, 8)} />
        <polygon points={octagon(x, 509.3, 8)} />
      </g>
    ))}
    {PIN_X.slice(8).map((x) => (
      <g key={x}>
        <polygon points={octagon(x, 300, 8)} fill="none" stroke={RING} strokeWidth="3.6" />
        <Cross x={x} y={300} r={5} />
      </g>
    ))}
    {PIN_X.map((x) => (
      <polygon key={x} points={`${x - 17},${293} ${x - 9},${282} ${x + 9},${282} ${x + 17},${293} ${x + 17},${308} ${x + 9},${319} ${x - 9},${319} ${x - 17},${308}`} fill="none" stroke={GRAY} strokeWidth="2" />
    ))}
    <Cross x={1058.4} y={300} r={7} />

    {[[1268.6, 552.7], [1250, 579.3], [1285.7, 579.3], [1372.6, 588.7], [1354, 615.3], [1389.7, 615.3]].map(([x, y]) => (
      <polygon key={x} points={octagon(x, y, 7.5)} fill="none" stroke={RING} strokeWidth="3.2" />
    ))}
    <Transistor dx={0} dy={0} name="T1" />
    <Transistor dx={104} dy={36} name="T2" />
    <circle cx="1067.5" cy="570" r="5" fill={PAD} />
    <rect x="1063" y="569" width="9" height="2" fill="#cfe" />

    <Label x={918.7} y={274}>JP4</Label>
    <Label x={1214} y={274}>JP1</Label>
    <Label x={1249.4} y={274}>JP2</Label>
    {JP_CROSSES.map(([x, y]) => <Cross key={x} x={x} y={y} color="#bbb" />)}

    <Label x={913.8} y={479} rotate>R7</Label>
    <Cross x={915} y={481} color="#bbb" />
    <Label x={1008.7} y={427} rotate>R5</Label>
    <Label x={1043} y={427} rotate>R4</Label>
    <Label x={1078.7} y={427} rotate>R1</Label>
    <Label x={1113} y={427} rotate>R3</Label>
    <Label x={1182.8} y={427} rotate>R2</Label>
    <Label x={1270} y={427} rotate>R9</Label>
    <Label x={1305} y={439} rotate>R10</Label>
    <Label x={1089} y={480} rotate>R6</Label>
    <Label x={1159} y={480} rotate>R8</Label>
    {RES_CROSSES.map((x) => <Cross key={x} x={x} y={397} color="#999" />)}
    <Cross x={1090} y={485} color="#999" />
    <Cross x={1160} y={485} color="#999" />

    <Label x={922.5} y={644} size={31}>D1</Label>
    <Label x={1132.5} y={644} size={31}>D2</Label>
    <Cross x={922} y={646} color="#bbb" />
    <Cross x={1132} y={646} color="#bbb" />

    <Label x={1354} y={856} size={33} rotate color={GOLD}>7-Segment</Label>
    <Cross x={1355} y={858} color="#cfcf99" />
  </BoardSvg>
);

/* ---------- small pictures ---------- */

const BrdLogo = () => (
  <svg width="17" height="22" viewBox="0 0 17 22">
    <rect x="0" y="1" width="17" height="14" fill="#2f9e5f" />
    <path d="M0 15h17v2l-5 5H0z" fill="#ddd" stroke="#999" strokeWidth="0.6" />
    <text x="8.5" y="12" fontSize="7.6" textAnchor="middle" fill="#fff" fontFamily="Liberation Mono" fontWeight="bold">BRD</text>
  </svg>
);

const SchBrd = () => (
  <svg width="23" height="25" viewBox="0 0 23 25">
    <rect width="23" height="12.5" fill="#c8202c" />
    <rect y="12.5" width="23" height="12.5" fill="#aaa" />
    <text x="11.5" y="10" fontSize="9.5" textAnchor="middle" fill="#fff" fontWeight="bold" fontFamily="Liberation Mono">SCH</text>
    <text x="11.5" y="22.5" fontSize="9.5" textAnchor="middle" fill="#ddd" fontWeight="bold" fontFamily="Liberation Mono">BRD</text>
  </svg>
);

const ScriptChip = ({ color, label }) => (
  <svg width="23" height="25" viewBox="0 0 23 25">
    <rect width="23" height="25" fill={color} />
    <text x="11.5" y="16" fontSize="9.5" textAnchor="middle" fill="#fff" fontWeight="bold" fontFamily="Liberation Mono">{label}</text>
  </svg>
);

const FusionMark = () => (
  <svg width="16" height="16" viewBox="0 0 16 16">
    <rect width="16" height="16" rx="2" fill="#f5a11f" />
    <path d="M4 2h8v3H7v2.5h4v3H7V14H4z" fill="#5b5b5b" />
  </svg>
);

const ChipMark = () => (
  <svg width="17" height="16" viewBox="0 0 17 16">
    <rect width="17" height="16" rx="2" fill="#14853f" />
    <rect x="5" y="4" width="7" height="8" fill="#e4e36a" />
    <rect x="6.5" y="5.5" width="4" height="5" fill="#14853f" />
    <path d="M3 6h2M3 8h2M3 10h2M12 6h2M12 8h2M12 10h2" stroke="#e4e36a" strokeWidth="1" />
  </svg>
);

const StartLogo = () => (
  <svg width="29" height="29" viewBox="0 0 29 29">
    <defs>
      <linearGradient id="win" x1="0" y1="0" x2="1" y2="1">
        <stop offset="0" stopColor="#46c8f7" />
        <stop offset="1" stopColor="#0a74cc" />
      </linearGradient>
    </defs>
    <path d="M0 0h14v14H0zM15 0h14v14H15zM0 15h14v14H0zM15 15h14v14H15z" fill="url(#win)" />
  </svg>
);

const TaskView = () => (
  <svg width="30" height="28" viewBox="0 0 30 28">
    <rect x="0" y="12" width="22" height="16" rx="2" fill="#222" />
    <rect x="8" y="0" width="22" height="20" rx="2" fill="#e9edf2" fillOpacity="0.85" />
  </svg>
);

const ChatIcon = () => (
  <svg width="29" height="30" viewBox="0 0 29 30">
    <path d="M14.5 0a14 13.5 0 0 1 14 14c0 8-6 13-14 13H3c3-2 0-5 0-13a12 13.5 0 0 1 11.5-14z" fill="#7b83eb" />
    <rect x="8" y="9" width="10" height="10" rx="1.5" fill="#fff" />
    <path d="M19 12l4-2.5v9L19 16z" fill="#fff" />
  </svg>
);

const StoreIcon = () => (
  <svg width="29" height="30" viewBox="0 0 29 30">
    <path d="M9 6V2h11v4" stroke="#28a8e8" strokeWidth="2" fill="none" />
    <rect y="5" width="29" height="25" rx="3" fill="#0c5a9e" />
    <rect x="9" y="12" width="5" height="5" fill="#f25022" />
    <rect x="15" y="12" width="5" height="5" fill="#7fba00" />
    <rect x="9" y="18" width="5" height="5" fill="#00a4ef" />
    <rect x="15" y="18" width="5" height="5" fill="#ffb900" />
  </svg>
);

const FolderIcon = () => (
  <svg width="30" height="28" viewBox="0 0 30 28">
    <path d="M0 2h11l3 3h16v23H0z" fill="#f4b81c" />
    <rect x="0" y="7" width="30" height="21" fill="#fbd13e" />
    <rect x="7" y="16" width="16" height="12" rx="1" fill="#0f78cf" />
    <rect x="7" y="20" width="16" height="2" fill="#9ad3f5" />
  </svg>
);

const EdgeIcon = () => (
  <svg width="30" height="30" viewBox="0 0 30 30">
    <defs>
      <linearGradient id="edge" x1="0" y1="0" x2="0.4" y2="1">
        <stop offset="0" stopColor="#2cb9ee" />
        <stop offset="0.55" stopColor="#1e8fd8" />
        <stop offset="1" stopColor="#0c4f96" />
      </linearGradient>
    </defs>
    <circle cx="15" cy="15" r="15" fill="url(#edge)" />
    <path d="M7 17C8 9 17 6 24 10c4 2 6 6 6 9-5 3-12 2-13-2 0-3 4-5 4-5-6-1-12 2-14 5z" fill="#37c98a" />
    <path d="M30 19c-3 4-9 7-14 4-4-2-4-8 0-10-1 5 3 9 14 6z" fill="#e9f1fb" />
  </svg>
);

const WhatsAppIcon = () => (
  <svg width="30" height="30" viewBox="0 0 30 30">
    <path d="M15 1a14 14 0 0 0-12 21L1 29l7-2A14 14 0 1 0 15 1z" fill="#fff" />
    <foreignObject x="1" y="1" width="28" height="28">
      <FaWhatsapp size={28} color="#25cf43" />
    </foreignObject>
  </svg>
);

const IconDisc = styled.span`
  width: 30px;
  height: 30px;
  border-radius: 50%;
  background: #5865f2;
  display: flex;
  align-items: center;
  justify-content: center;
`;

const DiscordIcon = () => (
  <IconDisc>
    <FaDiscord size={19} color="#fff" />
  </IconDisc>
);

const SublimeIcon = () => (
  <svg width="30" height="30" viewBox="0 0 30 30">
    <rect width="30" height="30" rx="3" fill="#3c3c3c" />
    <path d="M22 5v6L8 16v-6zM8 15l14 4v1L8 25v-6z" fill="#f79a1d" />
  </svg>
);

const EagleIcon = () => (
  <svg width="22" height="30" viewBox="0 0 22 30">
    <path d="M1 0h21v6H9v6h10v6H9v6h13v6H1c3-5 3-9 2-15S1 4 1 0z" fill="#b5692a" />
    <path d="M1 0h5c2 5 3 10 3 15s-1 10-3 15H1c3-5 3-9 2-15S1 4 1 0z" fill="#d48a44" />
  </svg>
);

const ChromeIcon = () => (
  <svg width="30" height="30" viewBox="0 0 30 30">
    <path d="M15 15L2 7.5A15 15 0 0 1 28 7.5z" fill="#e3392b" />
    <path d="M15 15L28 7.5A15 15 0 0 1 15 30z" fill="#fcc419" />
    <path d="M15 15L15 30A15 15 0 0 1 2 7.5z" fill="#2f9f47" />
    <circle cx="15" cy="15" r="7.6" fill="#fff" />
    <circle cx="15" cy="15" r="6" fill="#2f7fe8" />
  </svg>
);

const CloudIcon = () => (
  <svg width="31" height="24" viewBox="0 0 31 24">
    <defs>
      <linearGradient id="cloud" x1="0" y1="0" x2="0" y2="1">
        <stop offset="0" stopColor="#c5dcf6" />
        <stop offset="1" stopColor="#6ea4e4" />
      </linearGradient>
    </defs>
    <path d="M7 23a6.5 6.5 0 0 1-1-13A9 9 0 0 1 23 9a7 7 0 0 1 1 14z" fill="url(#cloud)" />
  </svg>
);

const TrayCloud = () => (
  <svg width="20" height="20" viewBox="0 0 20 20">
    <path d="M3 18a3.5 3.5 0 0 1 0-7c1-7 12-7 14 0a3.5 3.5 0 0 1 0 7z" fill="#aaa" stroke="#333" strokeWidth="1.2" />
  </svg>
);

const Wifi = () => (
  <svg width="20" height="20" viewBox="0 0 20 20" fill="none" stroke="#333" strokeWidth="1.4">
    <path d="M1 7a13 13 0 0 1 18 0" stroke="#aaa" />
    <path d="M4 10.5a9 9 0 0 1 12 0" />
    <path d="M7 14a5 5 0 0 1 6 0" />
    <circle cx="10" cy="17" r="1" fill="#333" />
  </svg>
);

const Speaker = () => (
  <svg width="20" height="20" viewBox="0 0 20 20" fill="none" stroke="#333" strokeWidth="1.2">
    <path d="M2 7h3l5-4v14l-5-4H2z" />
    <path d="M13 7a4 4 0 0 1 0 6M15.5 4.5a8 8 0 0 1 0 11" />
  </svg>
);

const Battery = () => (
  <svg width="21" height="16" viewBox="0 0 21 16">
    <rect x="1" y="1" width="16" height="14" rx="3" fill="none" stroke="#222" strokeWidth="1.6" />
    <rect x="3.5" y="3.5" width="4" height="9" fill="#222" />
    <rect x="18" y="5" width="2.5" height="6" fill="#222" />
  </svg>
);

const RestoreIcon = () => (
  <svg width="13" height="13" viewBox="0 0 13 13" fill="none" stroke="#222" strokeWidth="1">
    <rect x="0.5" y="2.5" width="10" height="10" rx="2" />
    <path d="M3 0.5h7.5a2 2 0 0 1 2 2V10" />
  </svg>
);

const StatusBolt = () => (
  <svg width="17" height="22" viewBox="0 0 17 22">
    <path d="M12 0L1 13h6l-3 9 12-14h-7z" fill="#14b04c" />
  </svg>
);

const StatusAlert = () => (
  <svg width="22" height="22" viewBox="0 0 22 22">
    <circle cx="11" cy="11" r="10.5" fill="#666" />
    <rect x="9.2" y="4" width="3.6" height="9" fill="#eee" />
    <circle cx="11" cy="17" r="2" fill="#eee" />
  </svg>
);

const StatusRoute = () => (
  <svg width="22" height="24" viewBox="0 0 22 24" fill="none">
    <path d="M2 3h8v10l8 6" stroke="#0a78c8" strokeWidth="2" />
    <circle cx="3" cy="3" r="2.6" fill="#12a84a" />
    <circle cx="19" cy="20" r="2.6" fill="#12a84a" />
    <path d="M8 13L2 19h3l-2 4 6-6H6z" fill="#555" />
  </svg>
);

/* ---------- page ---------- */

const MENU = ["File", "Edit", "Draw", "View", "Tools", "Library", "Options", "Window", "Help"];

export default function App() {
  return (
    <Page>
      <GlobalStyle />
      <TitleBar>
        <BrdLogo />
        <TitleText>2 Board - C:\Users\itsad\OneDrive\Documents\EAGLE\projects\7-Segment Display\7-Segment_display.brd - EAGLE 9.6.2 free [OFFLINE]</TitleText>
        <WindowControls>
          <Minus size={14} strokeWidth={1} />
          <RestoreIcon />
          <X size={17} strokeWidth={1.1} />
        </WindowControls>
      </TitleBar>

      <MenuBar>
        {MENU.map((m) => <span key={m}>{m}</span>)}
      </MenuBar>

      <MainToolbar>
        <Grip />
        <ToolButton $caret><Ico name="newdoc" /></ToolButton>
        <ToolButton><Ico name="save" /></ToolButton>
        <ToolButton><Ico name="print" /></ToolButton>
        <Separator />
        <ToolButton><SchBrd /></ToolButton>
        <Separator />
        <ToolButton><Ico name="factory" /></ToolButton>
        <ToolButton><Ico name="factoryDown" /></ToolButton>
        <Separator />
        <ToolButton><Ico name="books" /></ToolButton>
        <Separator />
        <ToolButton $caret><ScriptChip color="#1f6fbd" label="SCR" /></ToolButton>
        <ToolButton $caret><ScriptChip color="#e08a3c" label="ULP" /></ToolButton>
        <Separator />
        <ToolButton><Ico name="zoomFit" /></ToolButton>
        <ToolButton><Ico name="zoomIn" /></ToolButton>
        <ToolButton><Ico name="zoomOut" /></ToolButton>
        <ToolButton><Ico name="zoomEq" /></ToolButton>
        <ToolButton $caret><Ico name="zoomSel" /></ToolButton>
        <ToolButton><Ico name="refresh" /></ToolButton>
        <ToolButton><Ico name="ratsnest" /></ToolButton>
        <Separator />
        <ToolButton><Ico name="undo" /></ToolButton>
        <ToolButton><Ico name="redo" /></ToolButton>
        <Separator />
        <ToolButton><Ico name="stop" /></ToolButton>
        <ToolButton><Ico name="go" /></ToolButton>
        <Separator />
        <Separator />
        <ToolButton $w={38}><Ico name="help" /></ToolButton>
        <Separator />
        <Separator />
        <LinkButton $ml={3}>
          <Ico name="link" size={18} />
          <LinkLabel>DESIGN<br />LINK</LinkLabel>
        </LinkButton>
        <LinkButton>
          <Ico name="quote" size={18} />
          <LinkLabel>PCB<br />QUOTE</LinkLabel>
        </LinkButton>
      </MainToolbar>

      <SecondToolbar>
        <Grip />
        <ToolButton $w={33} $caret><Ico name="layers" /></ToolButton>
        <ToolButton $w={33} $caret><Ico name="grid" /></ToolButton>
        <ToolButton $w={31} $on><Ico name="filter" /></ToolButton>
        <Separator />
        <FieldLabel>Layer:</FieldLabel>
        <LayerSelect>
          <LayerChip />1 Top
        </LayerSelect>
      </SecondToolbar>

      <Workspace>
        <ToolStrip>
          <StripHandle />
          {stripGroups.map((group, i) => (
            <StripGroup key={i}>
              {group.map(([name, , on]) => (
                <StripCell key={name} $on={on}><Ico name={name} /></StripCell>
              ))}
            </StripGroup>
          ))}
          <StripChevron><Ico name="chevrons" size={16} /></StripChevron>
        </ToolStrip>

        <SidePanel>
          <Tabs>
            <Tab $w={102}>Design Manager</Tab>
            <Tab $w={68}>Inspector</Tab>
            <Tab $w={96} $active>Selection Filter</Tab>
          </Tabs>
          <Section $h={23} $pb={6}>Types</Section>
          <ListBox $h={247}>
            <BlueList>
              {typeNames.map((n) => (
                <BlueRow key={n}>
                  <RowIcon>
                    <svg width="16" height="16" viewBox="0 0 16 16">{typeIcons[n]}</svg>
                  </RowIcon>
                  {n}
                </BlueRow>
              ))}
              <BlueRow>
                <RowIcon>
                  <svg width="16" height="16" viewBox="0 0 16 16"><path d="M8 1l6 14H2z" fill="#12456e" /></svg>
                </RowIcon>
              </BlueRow>
            </BlueList>
            <ScrollTrack><ScrollThumb $h={196} /></ScrollTrack>
          </ListBox>
          <Section $h={28}>Layers</Section>
          <ListBox $h={121} $plain>
            <PlainList>
              <PlainRow>{"<All>"}</PlainRow>
              <PlainRow $alt>{"<Preset_Bottom>"}</PlainRow>
              <PlainRow>{"<Preset_Standard>"}</PlainRow>
              <PlainRow $alt>{"<Preset_Top>"}</PlainRow>
            </PlainList>
          </ListBox>
          <PanelGap $h={8} />
          <ListBox $h={363}>
            <BlueList>
              {layers.map(([label, fill, edge, dots]) => (
                <BlueRow key={label}>
                  <Swatch $fill={fill} $edge={edge} $dots={dots} />
                  {label}
                </BlueRow>
              ))}
            </BlueList>
            <ScrollTrack><ScrollThumb $h={309} /></ScrollTrack>
          </ListBox>
          <PanelFooter><ResetButton>Reset</ResetButton></PanelFooter>
        </SidePanel>

        <Stage>
          <CommandRow>
            <CoordText>50 mil (3657 2121)</CoordText>
            <CommandInput />
          </CommandRow>
          <CanvasRow>
            <Canvas>
              <Board />
              <SideTab $top={9} $pad={8} $gap={7}>
                <ChipMark />
                <SideTabText $ls={0.6}>MANUFACTURING</SideTabText>
              </SideTab>
              <SideTab $top={170} $pad={19} $gap={11}>
                <FusionMark />
                <SideTabText>FUSION 360</SideTabText>
              </SideTab>
              <SideTab $top={331} $pad={19} $gap={11}>
                <FusionMark />
                <SideTabText $ls={-0.4}>FUSION TEAM</SideTabText>
              </SideTab>
            </Canvas>
            <VScroll><VThumb /></VScroll>
          </CanvasRow>
          <HScroll><HThumb /></HScroll>
        </Stage>
      </Workspace>

      <StatusBar>
        Left-click &amp; drag to define group (or left-click to start defining a group polygon)
        <StatusIcons>
          <StatusBolt />
          <StatusAlert />
          <StatusRoute />
        </StatusIcons>
      </StatusBar>

      <TaskBar>
        <Weather>
          <CloudIcon />
          <div>
            <WeatherText>23°C</WeatherText>
            <WeatherText $dim>Cloudy</WeatherText>
          </div>
        </Weather>
        <StartLogo />
        <SearchPill>
          <Search size={18} color="#222" />
          Search
        </SearchPill>
        <TaskItem><TaskView /></TaskItem>
        <TaskItem><ChatIcon /></TaskItem>
        <TaskItem><StoreIcon /></TaskItem>
        <TaskItem><FolderIcon /><RunDot /></TaskItem>
        <TaskItem><EdgeIcon /></TaskItem>
        <TaskItem><WhatsAppIcon /><Badge>1</Badge></TaskItem>
        <TaskItem><DiscordIcon /></TaskItem>
        <TaskItem><SublimeIcon /></TaskItem>
        <TaskItem $active><EagleIcon /><RunDot $active /></TaskItem>
        <TaskItem><ChromeIcon /><RunDot /></TaskItem>
        <Tray>
          <TrayIcon $mr={7}><svg width="16" height="10" viewBox="0 0 16 10" fill="none" stroke="#222" strokeWidth="1.2"><path d="M1 9l7-8 7 8" /></svg></TrayIcon>
          <TrayIcon $mr={5}><TrayCloud /></TrayIcon>
          <TrayStack $w={50} $align="center" $mr={11}>ENG<br />IN</TrayStack>
          <TrayIcon $mr={3}><Wifi /></TrayIcon>
          <TrayIcon $mr={7.6}><Speaker /></TrayIcon>
          <TrayIcon $mr={1.4}><Battery /></TrayIcon>
          <TrayStack $w={92} $align="right">12:03 AM<br />22-11-2022</TrayStack>
        </Tray>
      </TaskBar>
    </Page>
  );
}
